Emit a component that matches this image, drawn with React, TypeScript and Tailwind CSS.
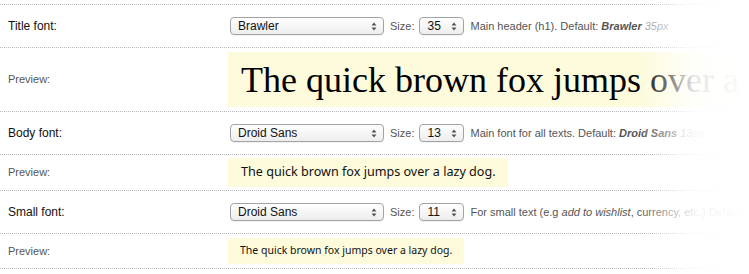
import React from "react";

const Arrows = () => (
  <svg width="6" height="9" viewBox="0 0 6 9" className="shrink-0">
    <path d="M0.5 3.5 L3 0.5 L5.5 3.5 Z" fill="#555" />
    <path d="M0.5 5.5 L3 8.5 L5.5 5.5 Z" fill="#555" />
  </svg>
);

const Select = ({ value, width }: { value: string; width: string }) => (
  <div
    className={`${width} shrink-0 h-[18px] flex items-center justify-between pl-[7px] pr-[6px] rounded-[4px] border border-[#a3a3a3] bg-gradient-to-b from-white to-[#ededed] shadow-[0_1px_0_rgba(0,0,0,0.05)] text-[12px] text-[#111] leading-none`}
  >
    <span>{value}</span>
    <Arrows />
  </div>
);

const SettingRow = ({
  label,
  font,
  size,
  help,
  top,
}: {
  label: string;
  font: string;
  size: string;
  help: React.ReactNode;
  top?: boolean;
}) => (
  <div
    className={`flex items-center h-[43px] border-b border-dotted border-[#b5b5b5] ${top ? "border-t h-[44px]" : ""}`}
  >
    <div className="w-[230px] pl-[8px] text-[12px] text-[#111] shrink-0">{label}</div>
    <Select value={font} width="w-[154px]" />
    <span className="ml-[6px] mr-[5px] text-[11px] text-[#555] shrink-0">Size:</span>
    <Select value={size} width="w-[45px]" />
    <span className="ml-[6px] text-[11px] text-[#555] whitespace-nowrap">{help}</span>
  </div>
);

export default function App() {
  return (
    <div
      className="relative w-[749px] h-[274px] bg-white overflow-hidden pt-[4px]"
      style={{ fontFamily: '"Liberation Sans", Arial, sans-serif' }}
    >
      <SettingRow
        top
        label="Title font:"
        font="Brawler"
        size="35"
        help={
          <>
            Main header (h1). Default: <b className="italic">Brawler</b>{" "}
            <i className="text-[#999]">35px</i>
          </>
        }
      />
      <div className="flex items-center h-[64px] border-b border-dotted border-[#b5b5b5]">
        <div className="w-[228px] pl-[8px] text-[11px] text-[#555] shrink-0">Preview:</div>
        <div
          className="h-[55px] flex-1 bg-[#fdfbdc] flex items-center pl-[13px] whitespace-nowrap overflow-hidden text-[36px] text-black leading-none"
          style={{ fontFamily: '"Liberation Serif", "Times New Roman", serif' }}
        >
          The quick brown fox jumps over a lazy dog.
        </div>
      </div>
      <SettingRow
        label="Body font:"
        font="Droid Sans"
        size="13"
        help={
          <>
            Main font for all texts. Default: <b className="italic">Droid Sans</b>{" "}
            <i className="text-[#999]">13px</i>
          </>
        }
      />
      <div className="flex items-center h-[36px] border-b border-dotted border-[#b5b5b5]">
        <div className="w-[228px] pl-[8px] text-[11px] text-[#555] shrink-0">Preview:</div>
        <div
          className="h-[29px] bg-[#fdfbdc] flex items-center pl-[13px] pr-[12px] whitespace-nowrap text-[12.6px] text-[#111]"
          style={{ fontFamily: '"Noto Sans", "Open Sans", sans-serif' }}
        >
          The quick brown fox jumps over a lazy dog.
        </div>
      </div>
      <SettingRow
        label="Small font:"
        font="Droid Sans"
        size="11"
        help={
          <>
            For small text (e.g <i>add to wishlist</i>, currency, etc.) Default:{" "}
            <b className="italic">Droid Sans</b> <i className="text-[#999]">11px</i>
          </>
        }
      />
      <div className="flex items-center h-[35px] border-b border-dotted border-[#b5b5b5]">
        <div className="w-[228px] pl-[8px] text-[11px] text-[#555] shrink-0">Preview:</div>
        <div
          className="h-[26px] bg-[#fdfbdc] flex items-center pl-[12px] pr-[12px] whitespace-nowrap text-[10.5px] text-[#111]"
          style={{ fontFamily: '"Noto Sans", "Open Sans", sans-serif' }}
        >
          The quick brown fox jumps over a lazy dog.
        </div>
      </div>
      <div className="absolute top-0 right-0 h-full w-[110px] bg-gradient-to-r from-white/0 via-white/90 to-white" />
    </div>
  );
}
